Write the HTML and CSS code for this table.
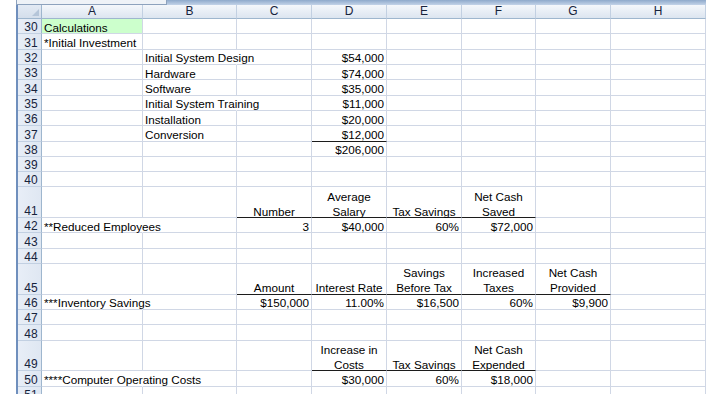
FILE: index.html
```html
<!DOCTYPE html>
<html>
<head>
<meta charset="utf-8">
<link rel="stylesheet" href="styles.css">
</head>
<body>
<div class="sheet">
  <div class="topbar"><div class="tb-box"></div><div class="tb-rest"></div></div>
  <div class="grid">
    <div class="row head">
      <div class="corner"><span class="tri"></span></div>
      <div class="ch">A</div><div class="ch">B</div><div class="ch">C</div><div class="ch">D</div>
      <div class="ch">E</div><div class="ch">F</div><div class="ch">G</div><div class="ch">H</div>
    </div>
    <div class="row">
      <div class="rh"><span>30</span></div><div class="c green"><span>Calculations</span></div><div class="c"></div><div class="c"></div><div class="c"></div><div class="c"></div><div class="c"></div><div class="c"></div><div class="c"></div>
    </div>
    <div class="row">
      <div class="rh"><span>31</span></div><div class="c"><span>*Initial Investment</span></div><div class="c"></div><div class="c"></div><div class="c"></div><div class="c"></div><div class="c"></div><div class="c"></div><div class="c"></div>
    </div>
    <div class="row">
      <div class="rh"><span>32</span></div><div class="c"></div><div class="c ov"><span>Initial System Design</span></div><div class="c"></div><div class="c r"><span>$54,000</span></div><div class="c"></div><div class="c"></div><div class="c"></div><div class="c"></div>
    </div>
    <div class="row">
      <div class="rh"><span>33</span></div><div class="c"></div><div class="c"><span>Hardware</span></div><div class="c"></div><div class="c r"><span>$74,000</span></div><div class="c"></div><div class="c"></div><div class="c"></div><div class="c"></div>
    </div>
    <div class="row">
      <div class="rh"><span>34</span></div><div class="c"></div><div class="c"><span>Software</span></div><div class="c"></div><div class="c r"><span>$35,000</span></div><div class="c"></div><div class="c"></div><div class="c"></div><div class="c"></div>
    </div>
    <div class="row">
      <div class="rh"><span>35</span></div><div class="c"></div><div class="c ov"><span>Initial System Training</span></div><div class="c"></div><div class="c r"><span>$11,000</span></div><div class="c"></div><div class="c"></div><div class="c"></div><div class="c"></div>
    </div>
    <div class="row">
      <div class="rh"><span>36</span></div><div class="c"></div><div class="c"><span>Installation</span></div><div class="c"></div><div class="c r"><span>$20,000</span></div><div class="c"></div><div class="c"></div><div class="c"></div><div class="c"></div>
    </div>
    <div class="row">
      <div class="rh"><span>37</span></div><div class="c"></div><div class="c"><span>Conversion</span></div><div class="c"></div><div class="c r bb"><span>$12,000</span></div><div class="c"></div><div class="c"></div><div class="c"></div><div class="c"></div>
    </div>
    <div class="row">
      <div class="rh"><span>38</span></div><div class="c"></div><div class="c"></div><div class="c"></div><div class="c r"><span>$206,000</span></div><div class="c"></div><div class="c"></div><div class="c"></div><div class="c"></div>
    </div>
    <div class="row">
      <div class="rh"><span>39</span></div><div class="c"></div><div class="c"></div><div class="c"></div><div class="c"></div><div class="c"></div><div class="c"></div><div class="c"></div><div class="c"></div>
    </div>
    <div class="row">
      <div class="rh"><span>40</span></div><div class="c"></div><div class="c"></div><div class="c"></div><div class="c"></div><div class="c"></div><div class="c"></div><div class="c"></div><div class="c"></div>
    </div>
    <div class="row tall">
      <div class="rh"><span>41</span></div><div class="c"></div><div class="c"></div><div class="c ctr bb"><span>Number</span></div><div class="c ctr bb"><span>Average<br>Salary</span></div><div class="c ctr bb"><span>Tax Savings</span></div><div class="c ctr bb"><span>Net Cash<br>Saved</span></div><div class="c"></div><div class="c"></div>
    </div>
    <div class="row">
      <div class="rh"><span>42</span></div><div class="c ov"><span>**Reduced Employees</span></div><div class="c"></div><div class="c r"><span>3</span></div><div class="c r"><span>$40,000</span></div><div class="c r"><span>60%</span></div><div class="c r"><span>$72,000</span></div><div class="c"></div><div class="c"></div>
    </div>
    <div class="row">
      <div class="rh"><span>43</span></div><div class="c"></div><div class="c"></div><div class="c"></div><div class="c"></div><div class="c"></div><div class="c"></div><div class="c"></div><div class="c"></div>
    </div>
    <div class="row">
      <div class="rh"><span>44</span></div><div class="c"></div><div class="c"></div><div class="c"></div><div class="c"></div><div class="c"></div><div class="c"></div><div class="c"></div><div class="c"></div>
    </div>
    <div class="row tall">
      <div class="rh"><span>45</span></div><div class="c"></div><div class="c"></div><div class="c ctr bb"><span>Amount</span></div><div class="c ctr bb"><span>Interest Rate</span></div><div class="c ctr bb"><span>Savings<br>Before Tax</span></div><div class="c ctr bb"><span>Increased<br>Taxes</span></div><div class="c ctr bb"><span>Net Cash<br>Provided</span></div><div class="c"></div>
    </div>
    <div class="row">
      <div class="rh"><span>46</span></div><div class="c ov"><span>***Inventory Savings</span></div><div class="c"></div><div class="c r"><span>$150,000</span></div><div class="c r"><span>11.00%</span></div><div class="c r"><span>$16,500</span></div><div class="c r"><span>60%</span></div><div class="c r"><span>$9,900</span></div><div class="c"></div>
    </div>
    <div class="row">
      <div class="rh"><span>47</span></div><div class="c"></div><div class="c"></div><div class="c"></div><div class="c"></div><div class="c"></div><div class="c"></div><div class="c"></div><div class="c"></div>
    </div>
    <div class="row">
      <div class="rh"><span>48</span></div><div class="c"></div><div class="c"></div><div class="c"></div><div class="c"></div><div class="c"></div><div class="c"></div><div class="c"></div><div class="c"></div>
    </div>
    <div class="row tall">
      <div class="rh"><span>49</span></div><div class="c"></div><div class="c"></div><div class="c"></div><div class="c ctr bb"><span>Increase in<br>Costs</span></div><div class="c ctr bb"><span>Tax Savings</span></div><div class="c ctr bb"><span>Net Cash<br>Expended</span></div><div class="c"></div><div class="c"></div>
    </div>
    <div class="row">
      <div class="rh"><span>50</span></div><div class="c ov"><span>****Computer Operating Costs</span></div><div class="c"></div><div class="c"></div><div class="c r"><span>$30,000</span></div><div class="c r"><span>60%</span></div><div class="c r"><span>$18,000</span></div><div class="c"></div><div class="c"></div>
    </div>
    <div class="row">
      <div class="rh"><span>51</span></div><div class="c"></div><div class="c"></div><div class="c"></div><div class="c"></div><div class="c"></div><div class="c"></div><div class="c"></div><div class="c"></div>
    </div>
  </div>
</div>
</body>
</html>
```
FILE: styles.css
```css
html, body {
  margin: 0;
  padding: 0;
  background: #ffffff;
  overflow: hidden;
}
body {
  font-family: "Liberation Sans", Arial, sans-serif;
  font-size: 11.7px;
  color: #000;
}
.sheet {
  padding-left: 16px;
  height: 394px;
  overflow: hidden;
}
.topbar {
  height: 5px;
  display: flex;
  width: 690px;
  box-sizing: border-box;
}
.tb-box {
  width: 151px;
  background: #eef2f7;
  border: 1px solid #8da2bd;
  border-top: none;
  box-sizing: border-box;
}
.tb-rest {
  flex: 1;
  background: linear-gradient(#8ea9cb, #c3d3e8);
}
.grid {
  border-left: 2px solid #6f8fbd;
  width: 688px;
}
.row {
  display: grid;
  grid-template-columns: 24px 101px 94px 75px 75px 75px 74px 75px 95px;
  height: 15.32px;
}
.row.tall {
  height: 30.64px;
}
.row.head {
  height: 14px;
}
.row > div {
  box-sizing: border-box;
  min-width: 0;
}
.corner {
  position: relative;
  background: linear-gradient(#e3eaf4, #d4deeb);
  border-right: 1px solid #9eb6ce;
  border-bottom: 1px solid #9eb6ce;
}
.tri {
  position: absolute;
  right: 2px;
  bottom: 2px;
  width: 0;
  height: 0;
  border-left: 7px solid transparent;
  border-bottom: 7px solid #b5c5d9;
}
.ch {
  background: linear-gradient(#f4f7fb, #dce5f0);
  border-right: 1px solid #c2d0e2;
  border-bottom: 1px solid #9eb6ce;
  display: flex;
  align-items: center;
  justify-content: center;
  color: #17233c;
  font-size: 12px;
  line-height: 13px;
}
.rh {
  background: linear-gradient(90deg, #e8eef7, #dfe7f2);
  border-right: 1px solid #9eb6ce;
  border-bottom: 1px solid #c2d0e2;
  display: flex;
  align-items: flex-end;
  justify-content: center;
  color: #17233c;
  font-size: 12px;
  line-height: 14px;
  padding-left: 3px;
}
.rh > span {
  margin-bottom: -1px;
}
.c {
  border-right: 1px solid #d0d7e5;
  border-bottom: 1px solid #d0d7e5;
  display: flex;
  align-items: flex-end;
  justify-content: flex-start;
  padding: 0 2px 0 2px;
  white-space: nowrap;
  line-height: 15px;
}
.c > span {
  position: relative;
  z-index: 1;
  margin-bottom: -1.5px;
}
.c.ov {
  border-right-color: transparent;
}
.c.r {
  justify-content: flex-end;
  padding-right: 2px;
}
.c.ctr {
  justify-content: center;
  text-align: center;
}
.c.bb {
  border-bottom-color: #1c1c1c;
}
.c.green {
  background: #ccffcc;
}
```
